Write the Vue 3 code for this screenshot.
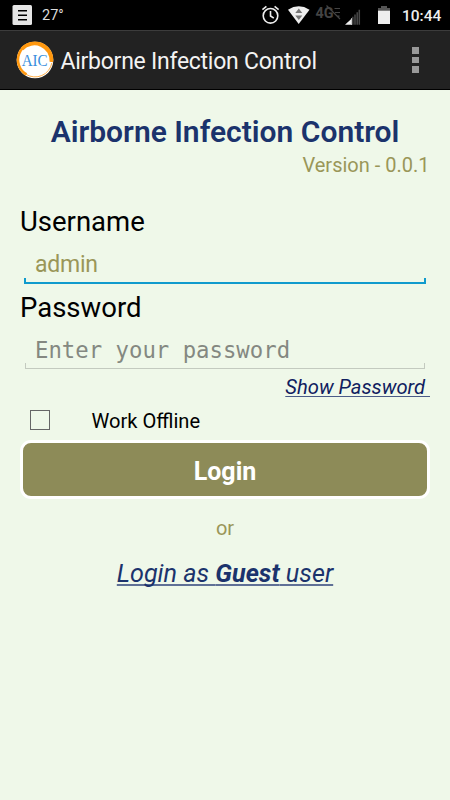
<script setup>
import { ref } from 'vue'

const username = ref('admin')
const password = ref('')
const offline = ref(false)
const showPassword = ref(false)
</script>

<template>
  <div class="screen">
    <div class="status">
      <svg class="note" width="20" height="20" viewBox="0 0 20 20">
        <rect x="0.500" width="19.500" height="20" rx="1.500" fill="#e6e6e6" />
        <path d="M6 5.800h9M6 10.200h9M6 14.700h9" stroke="#000" stroke-width="1.500" />
      </svg>
      <span class="temp">27°</span>
      <svg class="icons" width="130" height="30" viewBox="0 0 130 30">
        <!-- alarm -->
        <g fill="none" stroke="#eee" stroke-width="1.600">
          <circle cx="20.500" cy="15.800" r="7.300" />
          <path d="M20.500 11v5l3.300 2.200M12.400 9.600l4-3.200M28.600 9.600l-4-3.200" />
        </g>
        <!-- wifi -->
        <path d="M38 9.700Q48.700 3 59.500 9.700L48.700 24Z" fill="#eee" />
        <path d="M45.300 13l3.500-4.500 3.500 4.500zM45.300 15.500l3.500 4.500 3.500-4.500z" fill="#777" />
        <!-- mobile data -->
        <text x="65.500" y="18" textLength="18" lengthAdjust="spacingAndGlyphs" class="net">4G</text>
        <path d="M76.500 5.500l13.500 13.500M84.500 8.500h5.500M85 12.500h5M87 16.200h2.500" stroke="#444" stroke-width="1.200" />
        <!-- signal -->
        <path d="M95 24.800l7-6.500v6.500z" fill="#eee" />
        <path d="M102.800 24.800v-8M105 24.800v-10.300M107.200 24.800v-12.500M109.300 24.800v-15" stroke="#484848" stroke-width="1.500" />
        <path d="M101.500 24.800v-6.500" stroke="#ccc" stroke-width="1" />
      </svg>
      <svg class="battery" width="12" height="18" viewBox="0 0 12 18">
        <path d="M3 0h6v2h3v3H0V2h3z" fill="#555" />
        <path d="M0 4.700h12V18H0z" fill="#eee" />
      </svg>
      <span class="time">10:44</span>
    </div>

    <div class="bar">
      <svg class="logo" width="38" height="38" viewBox="0 0 38 38">
        <circle cx="19" cy="19" r="18.300" fill="#fff" />
        <path d="M10.500 33.500A17 17 0 1 1 35.900 20.500" fill="none" stroke="#ff980f" stroke-width="2.600" />
        <path d="M6 8A17 17 0 0 1 35.300 21" fill="none" stroke="#ff980f" stroke-width="3.400" />
        <path d="M35.800 22A17 17 0 0 1 10 33.300" fill="none" stroke="#ffb04a" stroke-width="1" />
        <text x="5.700" y="24.800" textLength="26" lengthAdjust="spacingAndGlyphs" class="aic">AIC</text>
      </svg>
      <span class="app-name">Airborne Infection Control</span>
      <div class="menu"><i></i><i></i><i></i></div>
    </div>

    <div class="content">
      <h1>Airborne Infection Control</h1>
      <p class="version">Version - 0.0.1</p>

      <label class="label" for="user">Username</label>
      <div class="field active">
        <input id="user" v-model="username" type="text" />
      </div>

      <label class="label second" for="pass">Password</label>
      <div class="field">
        <input id="pass" v-model="password" class="mono" :type="showPassword ? 'text' : 'password'" placeholder="Enter your password" />
      </div>

      <a class="show" @click="showPassword = !showPassword">Show Password&nbsp;</a>

      <label class="offline">
        <input v-model="offline" type="checkbox" />
        <span>Work Offline</span>
      </label>

      <button class="login">Login</button>
      <p class="or">or</p>
      <a class="guest">Login as <b>Guest</b> user</a>
    </div>
  </div>
</template>

<style>
body {
  margin: 0;
  background: #eff8e9;
}
</style>

<style scoped>
.screen {
  width: 450px;
  height: 800px;
  overflow: hidden;
  background: #eff8e9;
  font-family: Roboto, sans-serif;
  color: #000;
}

.status {
  display: flex;
  align-items: center;
  height: 30px;
  background: #000;
  color: #eee;
}

.note {
  margin-left: 12px;
}

.temp {
  margin-left: 10px;
  width: 30px;
  font-size: 14.500px;
  line-height: 18px;
  padding-top: 1px;
  color: #ddd;
}

.icons {
  margin-left: 178px;
}

.net {
  font-size: 14.500px;
  font-weight: 700;
  fill: #444;
}

.aic {
  font-family: "Liberation Serif", serif;
  font-size: 17px;
  fill: #3a8fdd;
}

.battery {
  margin-left: -2px;
}

.time {
  margin-left: 12px;
  padding-top: 1px;
  font-size: 15.500px;
  font-weight: 500;
}

.bar {
  display: flex;
  align-items: center;
  box-sizing: border-box;
  height: 60px;
  border-top: 1px solid #3c3c3c;
  border-bottom: 1px solid #000;
  background: #222;
}

.logo {
  margin-left: 16px;
}

.app-name {
  flex: 1;
  margin-left: 6.500px;
  padding-top: 3px;
  font-size: 23px;
  letter-spacing: -0.260px;
  line-height: 38px;
  color: #f3f3f3;
}

.menu {
  display: flex;
  flex-direction: column;
  gap: 3px;
  margin-right: 31px;
}

.menu i {
  width: 7px;
  height: 6.500px;
  background: #999;
}

.content {
  display: flex;
  flex-direction: column;
  padding: 22px 20px 0;
}

h1 {
  margin: 0;
  font-size: 30px;
  line-height: 40px;
  font-weight: 600;
  text-align: center;
  white-space: nowrap;
  color: #1b336c;
}

.version {
  margin: 0 0.500px 0 0;
  font-size: 20px;
  line-height: 26px;
  text-align: right;
  color: #9a9658;
}

.label {
  margin-top: 25px;
  font-size: 27.500px;
  line-height: 38px;
}

.label.second {
  margin-top: 5px;
}

/* holo style underline with small notches on both ends */
.field {
  box-sizing: border-box;
  height: 42px;
  margin: 0 5px;
  padding: 3px 10px 0;
  background:
    linear-gradient(#c3cabf, #c3cabf) left bottom / 1px 6px no-repeat,
    linear-gradient(#c3cabf, #c3cabf) right bottom / 1px 6px no-repeat,
    linear-gradient(#c3cabf, #c3cabf) left bottom / 100% 1.500px no-repeat;
}

.field.active {
  height: 43px;
  margin: 0 4px;
  padding: 3px 11px 0;
  background:
    linear-gradient(#109bcd, #109bcd) left bottom / 2px 6px no-repeat,
    linear-gradient(#109bcd, #109bcd) right bottom / 2px 6px no-repeat,
    linear-gradient(#109bcd, #109bcd) left bottom / 100% 2px no-repeat;
}

.field input {
  display: block;
  width: 100%;
  height: 40px;
  padding: 0;
  border: 0;
  outline: 0;
  background: none;
  font-family: Roboto, sans-serif;
  font-size: 23px;
  letter-spacing: -0.250px;
  color: #9a9658;
}

.field .mono {
  height: 39px;
  font-family: "DejaVu Sans Mono", monospace;
  font-size: 22.300px;
  letter-spacing: 0;
}

.mono::placeholder {
  color: #848881;
  opacity: 1;
}

.show {
  align-self: flex-end;
  margin-top: 5px;
  font-size: 20.200px;
  line-height: 26px;
  font-style: italic;
  text-decoration: underline 1px #4b5b88;
  text-underline-offset: 2px;
  color: #10205f;
}

.offline {
  display: flex;
  align-items: center;
  height: 40px;
  font-size: 20.100px;
}

.offline input {
  appearance: none;
  width: 20px;
  height: 20px;
  margin: 0 41.500px 0 10px;
  border: 1px solid #666;
}

.offline span {
  padding-top: 2px;
}

.login {
  height: 59px;
  padding: 3px 0 0;
  border: 3px solid #fff;
  border-radius: 11px;
  background: #8d8b58;
  font-family: Roboto, sans-serif;
  font-size: 25px;
  font-weight: 700;
  color: #fff;
}

.or {
  margin: 16px 0 0;
  font-size: 20px;
  line-height: 26px;
  text-align: center;
  color: #9a9658;
}

.guest {
  align-self: center;
  margin-top: 17px;
  font-size: 25.200px;
  line-height: 32px;
  font-style: italic;
  text-decoration: underline 1.500px #5f7096;
  text-underline-offset: 2px;
  text-decoration-skip-ink: none;
  color: #1b336c;
}
</style>
